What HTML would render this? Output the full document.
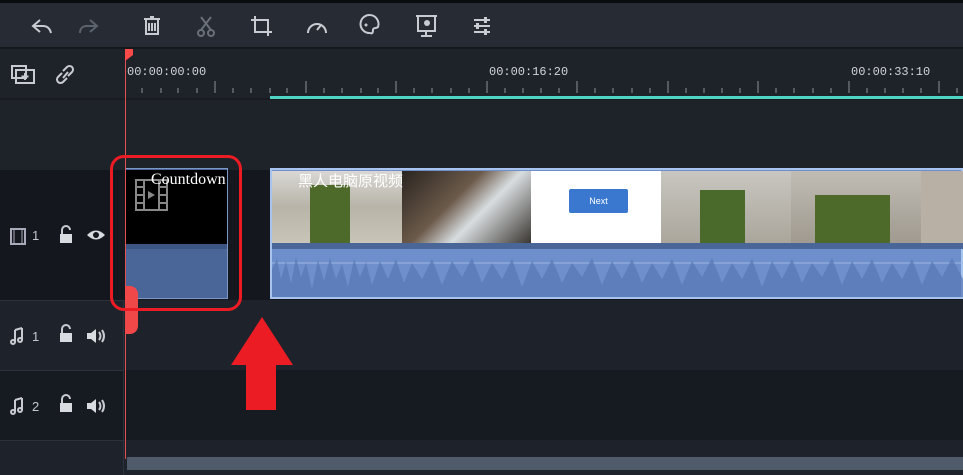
<!DOCTYPE html><html><head><style>
body{margin:0;width:963px;height:475px;overflow:hidden;background:#1e2229;font-family:"Liberation Sans","Noto Sans CJK SC",sans-serif;position:relative}
div{position:absolute}
.ic{stroke:#c8ccd2;fill:none;stroke-width:2}
.t{color:#c3c8cf;font-size:13px}
</style></head><body>
<div style="left:0;top:0;width:963px;height:3px;background:#0b0c0f"></div>
<div style="left:0;top:3px;width:963px;height:44px;background:#262b34"></div>
<div style="left:0;top:47px;width:963px;height:2px;background:#15181d"></div>
<svg style="position:absolute;left:0;top:0" width="500" height="47">
<path class="ic" d="M40 20l-7 6 7 6M33 26h10c5 0 7 3 8 7"/>
<path class="ic" style="stroke:#5d636c" d="M90 20l7 6-7 6M97 26h-10c-5 0-7 3-7 7"/>
<path class="ic" d="M144 19h16M150 17h4M146 20v14h12V20M149 23v8M152 23v8M155 23v8"/>
<g style="stroke:#6a7078;fill:none;stroke-width:2"><path d="M201 17l10 13M211 17l-10 13"/><circle cx="201" cy="33" r="3"/><circle cx="211" cy="33" r="3"/></g>
<path class="ic" d="M255 16v16h17M251 20h17v16"/>
<path class="ic" d="M308 33a9 9 0 1 1 18 0M317 30l4-5"/>
<path class="ic" d="M370 33a9 9 0 1 1 8-6c-2 2-5 0-5 3s-1 4-3 3z"/><circle cx="366" cy="25" r="1.5" fill="#c8ccd2"/>
<path class="ic" d="M416 16h21M418 16v15h17V16M426 31v4M421 36h11"/><circle cx="427" cy="23" r="3" fill="#c8ccd2"/>
<path class="ic" d="M474 20h16M474 26h16M474 32h16"/><rect x="484" y="17" width="3" height="6" fill="#c8ccd2"/><rect x="476" y="23" width="3" height="6" fill="#c8ccd2"/><rect x="484" y="29" width="3" height="6" fill="#c8ccd2"/>
</svg>
<svg style="position:absolute;left:0;top:49px" width="124" height="50">
<rect x="12" y="17" width="14" height="12" class="ic" stroke-width="1.5"/><rect x="16" y="21" width="18" height="13" fill="#1e2229" class="ic" stroke-width="1.5"/><path d="M25 24v7M21.5 27.5h7" class="ic" stroke-width="1.5"/>
<path class="ic" d="M62 24l-4 4a3 3 0 0 0 5 5l4-4M68 27l4-4a3 3 0 0 0-5-5l-4 4M63 29l5-6"/>
</svg>
<div style="left:0;top:98px;width:963px;height:2px;background:#181b20"></div>
<div style="left:270px;top:96px;width:693px;height:3px;background:#4fd5c4"></div>
<div class="t" style="left:127px;top:65px;font-family:'Liberation Mono',monospace;font-size:12px;color:#d0d4da">00:00:00:00</div>
<div class="t" style="left:489px;top:65px;font-family:'Liberation Mono',monospace;font-size:12px;color:#d0d4da">00:00:16:20</div>
<div class="t" style="left:851px;top:65px;font-family:'Liberation Mono',monospace;font-size:12px;color:#d0d4da">00:00:33:10</div>
<svg style="position:absolute;left:125px;top:78px" width="838" height="18">
<g stroke="#8a929c" stroke-width="1">
<path d="M17 10v5M36 10v5M53 10v5M72 10v5M108 10v5M126 10v5M145 10v5M162 10v5M199 10v5M217 10v5M236 10v5M253 10v5M289 10v5M307 10v5M326 10v5M344 10v5M380 10v5M398 10v5M416 10v5M434 10v5M470 10v5M488 10v5M507 10v5M525 10v5M561 10v5M579 10v5M597 10v5M615 10v5M651 10v5M669 10v5M688 10v5M706 10v5M742 10v5M760 10v5M778 10v5M796 10v5M832 10v5"/>
<path d="M90 3v12M181 3v12M271 3v12M362 3v12M452 3v12M543 3v12M633 3v12M724 3v12M814 3v12"/>
</g></svg>
<div style="left:0;top:100px;width:963px;height:70px;background:#1e2229"></div>
<div style="left:0;top:170px;width:963px;height:130px;background:#14171d"></div>
<div style="left:0;top:300px;width:963px;height:70px;background:#1e222a"></div>
<div style="left:0;top:370px;width:963px;height:70px;background:#161a21"></div>
<div style="left:0;top:440px;width:963px;height:35px;background:#1e222a"></div>
<div style="left:123px;top:300px;width:1px;height:175px;background:#2c323b"></div>
<div style="left:0;top:300px;width:124px;height:1px;background:#2c323b"></div>
<div style="left:0;top:370px;width:124px;height:1px;background:#2c323b"></div>
<div style="left:0;top:440px;width:124px;height:1px;background:#2c323b"></div>
<svg style="position:absolute;left:0;top:170px" width="124" height="270">
<rect x="11" y="59" width="14" height="15" class="ic" stroke-width="1.3" style="stroke:#aab"/><path d="M14 59v15M22 59v15" stroke="#aab"/>
<g fill="#d8dce0"><rect x="60" y="64" width="12" height="9"/><rect x="60" y="163" width="12" height="9"/><rect x="60" y="233" width="12" height="9"/></g>
<g class="ic" stroke-width="2"><path d="M62 64v-4a4 4 0 0 1 8 0"/><path d="M62 163v-4a4 4 0 0 1 8 0"/><path d="M62 233v-4a4 4 0 0 1 8 0"/></g>
<path d="M87 65q9-9 18 0q-9 9-18 0z" fill="#d8dce0"/><circle cx="96" cy="65" r="3" fill="#14171d"/>
<g fill="#d8dce0"><path d="M87 163h4l5-4v14l-5-4h-4z"/><path d="M87 233h4l5-4v14l-5-4h-4z"/></g>
<g class="ic" stroke-width="1.3"><path d="M99 162q3 4 0 8M102 160q4 6 0 12M99 232q3 4 0 8M102 230q4 6 0 12"/>
<path d="M15 160v12M22 158v12M15 160l7-2M15 230v12M22 228v12M15 230l7-2"/><circle cx="13" cy="172" r="2"/><circle cx="20" cy="170" r="2"/><circle cx="13" cy="242" r="2"/><circle cx="20" cy="240" r="2"/></g>
</svg>
<div class="t" style="left:32px;top:228px">1</div>
<div class="t" style="left:32px;top:329px">1</div>
<div class="t" style="left:32px;top:399px">2</div>
<div style="left:125px;top:168px;width:103px;height:131px;background:#4a6699;border:1px solid #7d98c4;box-sizing:border-box"></div>
<div style="left:126px;top:170px;width:101px;height:74px;background:#000"></div>
<div style="left:126px;top:244px;width:101px;height:5px;background:#3c5583"></div>
<svg style="position:absolute;left:135px;top:179px" width="34" height="32"><rect x="1" y="1" width="31" height="30" fill="none" stroke="#888" stroke-width="2"/><path d="M9 1v30M24 1v30M1 8h8M1 16h8M1 24h8M24 8h8M24 16h8M24 24h8" stroke="#888" stroke-width="2"/><path d="M13 12l7 4-7 4z" fill="#888"/></svg>
<div style="left:151px;top:171px;width:76px;overflow:hidden;white-space:nowrap;color:#fff;font-family:'Liberation Serif',serif;font-size:16px">Countdown</div>
<div style="left:270px;top:168px;width:693px;height:131px;background:#6e8ecc;border:2px solid #a9c3ef;box-sizing:border-box"></div>
<div style="left:272px;top:171px;width:130px;height:72px;background:linear-gradient(#d8d8d4,#b8b4a8 50%,#c9c4b8)"></div>
<div style="left:310px;top:185px;width:40px;height:58px;background:#4d6a2a"></div>
<div style="left:402px;top:171px;width:129px;height:72px;background:linear-gradient(135deg,#2a2420,#6b5a4a 40%,#d8dde0 60%,#3a3530)"></div>
<div style="left:531px;top:171px;width:130px;height:72px;background:#fff"></div>
<div style="left:569px;top:189px;width:59px;height:24px;background:#3a78d0;border-radius:2px;color:#fff;font-size:9px;text-align:center;line-height:24px">Next</div>
<div style="left:661px;top:171px;width:130px;height:72px;background:linear-gradient(#c8c6c0,#aaa69c)"></div>
<div style="left:700px;top:190px;width:45px;height:53px;background:#4a6a2c"></div>
<div style="left:791px;top:171px;width:130px;height:72px;background:linear-gradient(#c0bcb4,#a09a90)"></div>
<div style="left:815px;top:195px;width:75px;height:48px;background:#4d6a2a"></div>
<div style="left:921px;top:171px;width:42px;height:72px;background:#b8b0a5"></div>
<div style="left:298px;top:170px;color:#fff;font-size:15px">黑人电脑原视频</div>
<div style="left:272px;top:243px;width:691px;height:6px;background:#4a6699"></div>
<svg style="position:absolute;left:272px;top:249px" width="691" height="48"><path d="M0 14h691" stroke="#9fb5e0"/><path d="M0 20 L5 10 L9 30 L14 12 L19 35 L24 8 L29 28 L34 14 L40 40 L46 11 L52 32 L58 9 L64 30 L70 15 L76 38 L82 10 L88 28 L94 13 L100 36 L108 12 L116 30 L124 10 L132 34 L140 14 L150 30 L160 10 L170 36 L180 12 L190 28 L200 9 L210 34 L220 14 L230 30 L240 10 L250 38 L260 12 L270 30 L280 10 L290 34 L300 14 L310 28 L320 9 L330 36 L340 12 L350 30 L360 10 L370 34 L380 14 L390 30 L400 10 L410 36 L420 12 L430 28 L440 9 L450 34 L460 14 L470 30 L480 10 L490 38 L500 12 L510 30 L520 10 L530 34 L540 14 L550 28 L560 9 L570 36 L580 12 L590 30 L600 10 L610 34 L620 14 L630 30 L640 10 L650 36 L660 12 L670 28 L680 9 L691 30 V48 H0z" fill="#5776b4" opacity=".7"/></svg>
<div style="left:125px;top:49px;width:1px;height:410px;background:#e25050"></div>
<div style="left:125px;top:49px;width:8px;height:12px;background:#ff4a4a;clip-path:polygon(0 0,100% 0,100% 50%,0 100%)"></div>
<div style="left:125px;top:286px;width:13px;height:48px;background:#f04848;border-radius:0 8px 8px 0"></div>
<div style="left:110px;top:155px;width:132px;height:156px;border:3px solid #ec1c24;border-radius:14px;box-sizing:border-box"></div>
<svg style="position:absolute;left:230px;top:315px" width="64" height="96"><path d="M32 2L63 50H46V95H16V50H1z" fill="#ec1c24"/></svg>
<div style="left:127px;top:457px;width:836px;height:13px;background:#4f5a6b"></div>
</body></html>
